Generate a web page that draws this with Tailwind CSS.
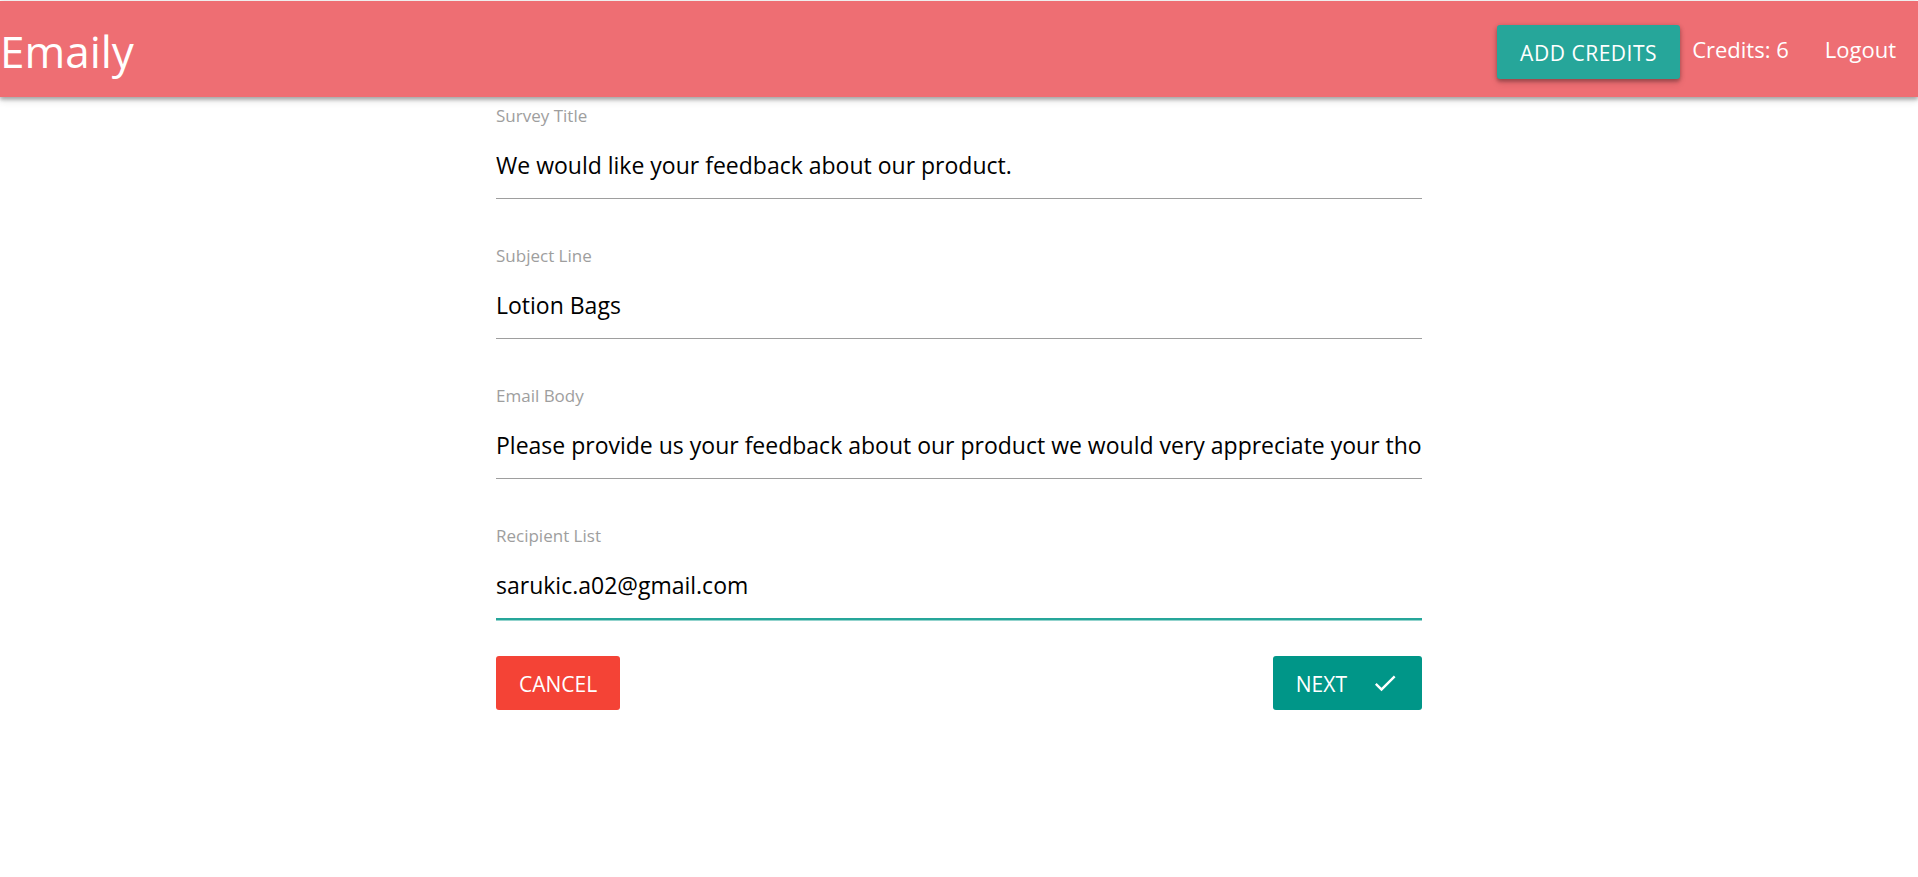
<!DOCTYPE html>
<html lang="en">
<head>
<meta charset="utf-8">
<meta name="viewport" content="width=device-width, initial-scale=1">
<title>Emaily</title>
<script src="https://cdn.jsdelivr.net/npm/@tailwindcss/browser@4"></script>
</head>
<body class="bg-white pt-px font-['Open_Sans','Noto_Sans',sans-serif] text-black">
<nav class="flex h-24 items-center justify-between bg-[#ee6e73] text-white shadow-[0_3px_3px_0_rgba(0,0,0,0.14),0_4px_7px_0_rgba(0,0,0,0.12),0_1px_5px_0_rgba(0,0,0,0.2)]">
  <a href="#" class="pt-1 text-[44px] leading-[96px]">Emaily</a>
  <ul class="flex items-center">
    <li><button type="button" class="mt-1.5 h-[54px] rounded-[3px] bg-[#26a69a] px-[23px] pt-1 text-[21px] tracking-wide shadow-[0_3px_3px_0_rgba(0,0,0,0.14),0_4px_7px_0_rgba(0,0,0,0.12),0_1px_5px_0_rgba(0,0,0,0.2)]">ADD CREDITS</button></li>
    <li class="ml-3 text-[22px]">Credits: 6</li>
    <li class="ml-3.5"><a href="#" class="px-[22px] text-[22px]">Logout</a></li>
  </ul>
</nav>
<main class="mx-auto max-w-[926px]">
  <form>
    <div class="flex h-[140px] flex-col pt-1">
      <label for="title" class="text-[17px] leading-[30px] text-[#9e9e9e]">Survey Title</label>
      <input id="title" type="text" value="We would like your feedback about our product." class="h-[68px] w-full border-b border-[#9e9e9e] pt-px text-[23px] outline-none">
    </div>
    <div class="flex h-[140px] flex-col pt-1">
      <label for="subject" class="text-[17px] leading-[30px] text-[#9e9e9e]">Subject Line</label>
      <input id="subject" type="text" value="Lotion Bags" class="h-[68px] w-full border-b border-[#9e9e9e] pt-px text-[23px] outline-none">
    </div>
    <div class="flex h-[140px] flex-col pt-1">
      <label for="body" class="text-[17px] leading-[30px] text-[#9e9e9e]">Email Body</label>
      <input id="body" type="text" value="Please provide us your feedback about our product we would very appreciate your thoughts." class="h-[68px] w-full border-b border-[#9e9e9e] pt-px text-[23px] outline-none">
    </div>
    <div class="flex h-[139px] flex-col pt-1">
      <label for="recipients" class="text-[17px] leading-[30px] text-[#9e9e9e]">Recipient List</label>
      <input id="recipients" type="text" value="sarukic.a02@gmail.com" class="h-[68px] w-full border-b border-[#26a69a] pt-px text-[23px] shadow-[0_1px_0_0_#26a69a,0_2px_0_0_#93d3cd] outline-none">
    </div>
    <div class="flex justify-between">
      <button type="button" class="h-[54px] rounded-[3px] bg-[#f44336] px-[23px] pt-1 text-[21px] text-white">CANCEL</button>
      <button type="submit" class="flex h-[54px] items-center rounded-[3px] bg-[#009688] px-[23px] text-[21px] text-white"><span class="pt-1">NEXT</span>
        <svg class="ml-6 size-7" viewBox="0 0 24 24" fill="currentColor" aria-hidden="true"><path d="M9 16.17 4.83 12l-1.42 1.41L9 19 21 7l-1.41-1.41z"/></svg>
      </button>
    </div>
  </form>
</main>
</body>
</html>
